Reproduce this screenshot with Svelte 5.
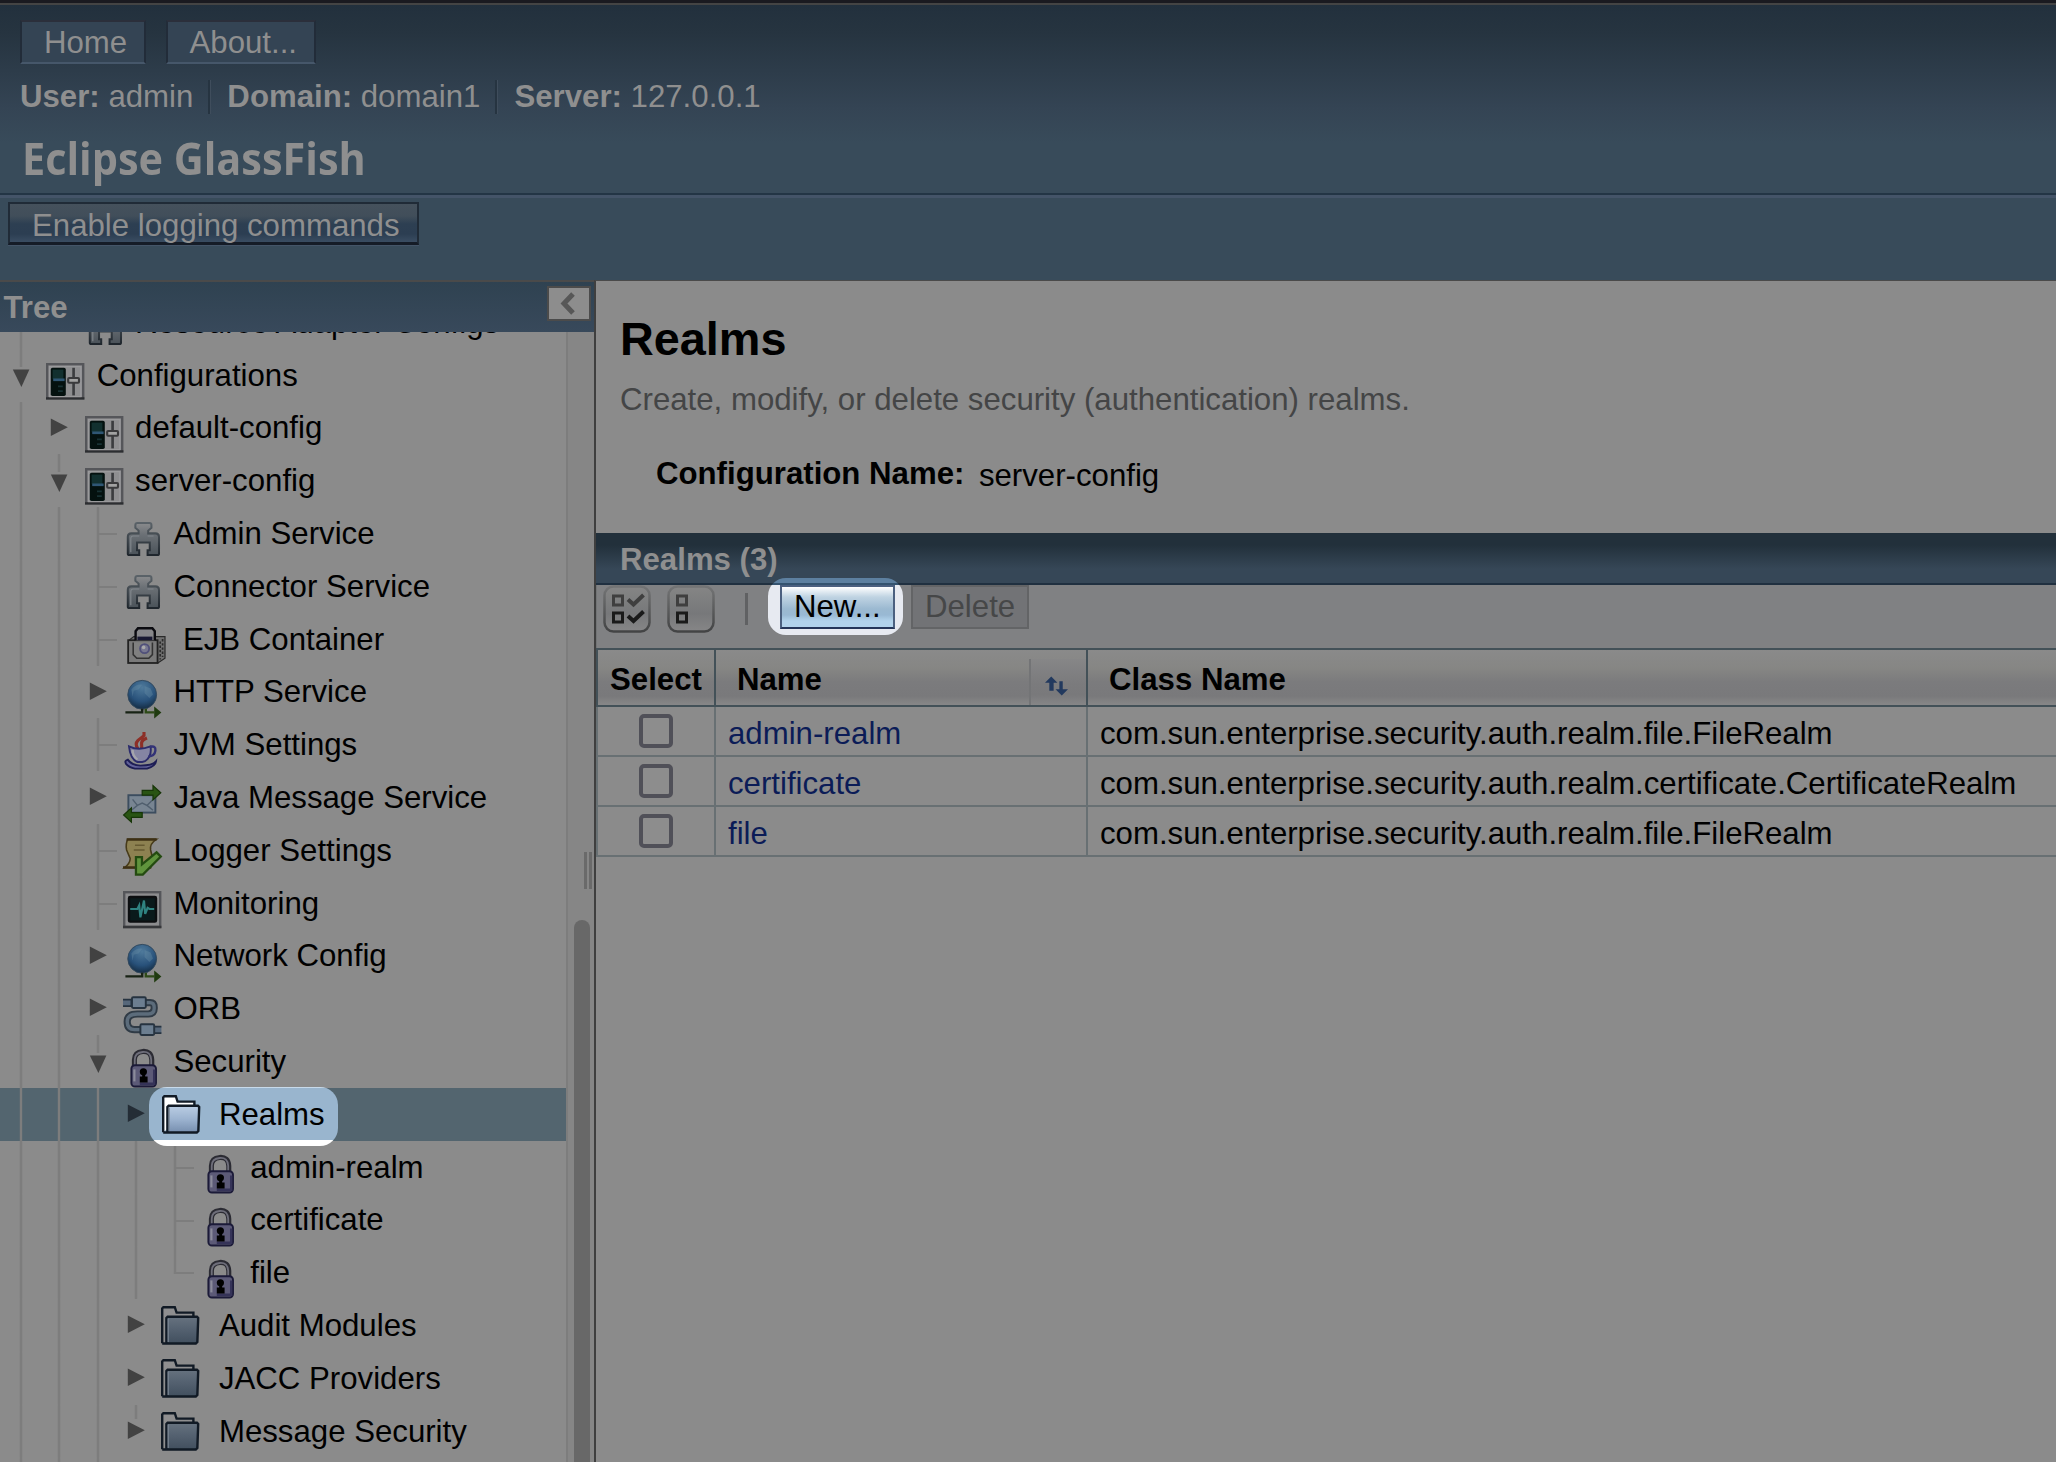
<script>
  const guides = (n) => Array.from({ length: n }, () => 'line');
  // cells: 'line' | 'tee' | 'ell' | 'none' | 'open' | 'closed' | 'closedtop'
  const rows = [
    { cells: ['line', 'none'], icon: 'plug', text: 'Resource Adapter Configs' },
    { cells: ['open'], icon: 'config', text: 'Configurations' },
    { cells: [...guides(1), 'closed'], icon: 'config', text: 'default-config' },
    { cells: [...guides(1), 'open'], icon: 'config', text: 'server-config' },
    { cells: [...guides(2), 'tee'], icon: 'plug', text: 'Admin Service' },
    { cells: [...guides(2), 'tee'], icon: 'plug', text: 'Connector Service' },
    { cells: [...guides(2), 'tee'], icon: 'ejb', text: 'EJB Container' },
    { cells: [...guides(2), 'closed'], icon: 'globe', text: 'HTTP Service' },
    { cells: [...guides(2), 'tee'], icon: 'java', text: 'JVM Settings' },
    { cells: [...guides(2), 'closed'], icon: 'jms', text: 'Java Message Service' },
    { cells: [...guides(2), 'tee'], icon: 'logger', text: 'Logger Settings' },
    { cells: [...guides(2), 'tee'], icon: 'monitor', text: 'Monitoring' },
    { cells: [...guides(2), 'closed'], icon: 'globe', text: 'Network Config' },
    { cells: [...guides(2), 'closed'], icon: 'orb', text: 'ORB' },
    { cells: [...guides(2), 'open'], icon: 'lock', text: 'Security' },
    { cells: [...guides(3), 'closed'], icon: 'folder', text: 'Realms', selected: true },
    { cells: [...guides(4), 'tee'], icon: 'lock', text: 'admin-realm' },
    { cells: [...guides(4), 'tee'], icon: 'lock', text: 'certificate' },
    { cells: [...guides(4), 'ell'], icon: 'lock', text: 'file' },
    { cells: [...guides(3), 'closed'], icon: 'folder', text: 'Audit Modules' },
    { cells: [...guides(3), 'closed'], icon: 'folder', text: 'JACC Providers' },
    { cells: [...guides(3), 'closedtop'], icon: 'folder', text: 'Message Security' },
    { cells: [...guides(3), 'none'], icon: '', text: '' }
  ];
  const realms = [
    { name: 'admin-realm', cls: 'com.sun.enterprise.security.auth.realm.file.FileRealm' },
    { name: 'certificate', cls: 'com.sun.enterprise.security.auth.realm.certificate.CertificateRealm' },
    { name: 'file', cls: 'com.sun.enterprise.security.auth.realm.file.FileRealm' }
  ];
</script>

{#snippet cell(kind)}
  <svg class="cell" viewBox="0 0 38.4 52.8">
    {#if kind === 'line' || kind === 'tee'}
      <rect class="guide" x="17.8" y="0" width="2.4" height="53" />
    {/if}
    {#if kind === 'tee'}
      <rect class="guide" x="20" y="26" width="18.4" height="2" />
    {/if}
    {#if kind === 'ell'}
      <path class="guide" d="M17.8 0h2.4v26h18.2v2H17.8z" />
    {/if}
    {#if kind === 'open'}
      <rect class="guide" x="17.8" y="0" width="2.4" height="18" />
      <path class="tri" d="M10.8 20.5h16.6l-8 17.5z" />
    {/if}
    {#if kind === 'closedtop'}
      <rect class="guide" x="17.8" y="0" width="2.4" height="14" />
    {/if}
    {#if kind === 'closed' || kind === 'closedtop'}
      <path class="tri" d="M10.8 16.5v17.5l17-8.7z" />
    {/if}
  </svg>
{/snippet}

{#snippet icon(kind)}
  <svg class="icon" class:folder={kind === 'folder'} viewBox="0 0 32 32">
    {#if kind === 'config'}
      <rect x="1" y="1" width="30" height="28.5" fill="#8e8e90" stroke="#55565a" stroke-width="2" />
      <path d="M0 29.500h32" stroke="#2c2e31" stroke-width="2" />
      <rect x="3" y="3" width="26" height="25" fill="none" stroke="#9a9a9c" />
      <rect x="4" y="4" width="12.500" height="23.500" rx="1.5" fill="#04110f" />
      <rect x="5.5" y="5.500" width="9" height="8" fill="#12302f" />
      <path d="M6 14h9.500" stroke="#2f5674" stroke-width="2.2" />
      <path d="M10 19.500h4M10 23.500h4" stroke="#173133" stroke-width="1.4" />
      <path d="M23 4v23" stroke="#3b3c3f" stroke-width="2.2" />
      <rect x="18.5" y="12.500" width="9" height="4" rx=".8" fill="#a2a2a2" stroke="#3a3a3c" stroke-width="1.8" />
    {:else if kind === 'plug'}
      <defs>
        <linearGradient id="plugfill" x1="0" y1="0" x2="0" y2="1"><stop offset="0" stop-color="#8a8b8d" /><stop offset=".35" stop-color="#6c7176" /><stop offset="1" stop-color="#4a5259" /></linearGradient>
        <linearGradient id="plugedge" x1="0" y1="0" x2="0" y2="1"><stop offset="0" stop-color="#5a6268" /><stop offset="1" stop-color="#1f262d" /></linearGradient>
      </defs>
      <path d="M12 1.700h10q1.700 0 1.700 1.700v2.300L21 8v2.300h6q3 0 3 3V27q0 1.300-1.300 1.300H20.500v-4h1.800V18H11.700v6.300h1.800v4H5.300Q4 28.300 4 27V13.300q0-3 3-3h6V8L10.300 5.700V3.400q0-1.700 1.700-1.700z" fill="url(#plugfill)" stroke="url(#plugedge)" stroke-width="1.700" />
      <path d="M6.500 26V14.500q0-2 2-2h5M20.500 12.500h5" fill="none" stroke="#80868b" stroke-width="1" />
    {:else if kind === 'ejb'}
      <path d="M5 11l4-3h26v18l-6 4z" fill="#707070" stroke="#2a2a2a" stroke-width="1" />
      <path d="M31 12v15M33 10v15" stroke="#2b2b2b" stroke-width="1.400" stroke-dasharray="2 1.500" />
      <rect x="4.300" y="11" width="24.500" height="19" fill="#7a7a7a" stroke="#222" stroke-width="1.500" />
      <path d="M10.500 11V3.500l2-2.500h12l2 2.500V11" fill="#87878a" stroke="#0b0b10" stroke-width="2" />
      <path d="M12 8h12.500v3H12z" fill="#1a1a33" />
      <path d="M8.500 13v10l3 3h10l3-3V13" fill="#808080" stroke="#333" stroke-width="1.300" />
      <circle cx="18" cy="18" r="3.800" fill="#777790" stroke="#50507a" stroke-width="1.500" /><circle cx="17.200" cy="17" r="1.500" fill="#aaa" />
    {:else if kind === 'globe'}
      <defs><radialGradient id="globefill" cx=".5" cy=".25" r=".8"><stop offset="0" stop-color="#4f7a9b" /><stop offset=".6" stop-color="#28517a" /><stop offset="1" stop-color="#11263a" /></radialGradient></defs>
      <circle cx="16" cy="12.300" r="12" fill="url(#globefill)" stroke="#33495d" stroke-width=".8" />
      <path d="M7 8q4-5 9-4l-3 4-4 1-1 5zM18 5l5 2 2 5-3 3-4-4z" fill="#6e92a9" opacity=".35" />
      <path d="M2 27h14v-3" fill="none" stroke="#182315" stroke-width="2" />
      <path d="M19 24v3h7" fill="none" stroke="#2e4a18" stroke-width="2" /><path d="M26 22l6 5-6 5z" fill="#203b10" />
    {:else if kind === 'java'}
      <path d="M17.500 0v3l-5 4q-3 3 0 7M20 5q-5 2-4.500 5t-.5 5" fill="none" stroke="#8d2f27" stroke-width="2.600" />
      <path d="M5 12q8 4 18 0 1 7-2.500 10.500-1.500 2-4.500 2.500h-4q-6-2.500-7-13z" fill="#8585a3" stroke="#2c2c6c" stroke-width="1.600" />
      <path d="M8 15q0 5 4 8" fill="none" stroke="#a5a5ac" stroke-width="2" />
      <path d="M22.500 12.500q5-1.500 4.500 3t-6 5" fill="none" stroke="#333377" stroke-width="2" />
      <path d="M4 23q-3 1-1.500 3.500Q5 29.500 10 30.500h10q7-2 7.500-6-3 3.500-13 3.500Q7 27.500 4 23z" fill="#62629a" stroke="#1e1e55" stroke-width="1.600" />
    {:else if kind === 'jms'}
      <rect x="4.500" y="8.500" width="22.500" height="14.500" fill="#788592" stroke="#3c4d5f" stroke-width="1.600" />
      <path d="M8 12l4 5 4-2 4 2 5-5M7 21l5-4M25 21l-5-4" fill="none" stroke="#505f6e" stroke-width="1.200" />
      <path d="M16 4.500h9V.5l6.500 6-6.500 6v-4h-9z" fill="#295413" stroke="#173508" />
      <path d="M16 23h-9v-4l-6.500 6L7 31v-4h9z" fill="#295413" stroke="#173508" />
    {:else if kind === 'logger'}
      <path d="M4 1h24q-6 4-5 9l2 8-2 7H1q5-4 5-8l-3-7q-1-5 1-9z" fill="#8d8151" stroke="#473b1a" stroke-width="1.300" />
      <path d="M3 1.200h25M0 24.500h10" stroke="#3e3015" stroke-width="2" /><path d="M10 6h8M9 10h9" stroke="#665a32" stroke-width="1.300" />
      <path d="M10.800 16h5v6L28 12l3.500 3.500L16.500 30.500h-5.700z" fill="#60943d" stroke="#244b11" stroke-width="1.900" />
    {:else if kind === 'monitor'}
      <rect x="1" y="1" width="30" height="29" fill="#8c8c8e" stroke="#55565a" stroke-width="2" />
      <path d="M0 30h32" stroke="#36373a" stroke-width="2" />
      <rect x="5" y="5" width="22.500" height="20.500" rx="1" fill="#0a1a1b" stroke="#0c0e10" stroke-width="2" />
      <path d="M6 15h6l1.500-3 1 10 3-14 1 11 2-5 1.500 1h4" fill="none" stroke="#2f8380" stroke-width="1.800" />
    {:else if kind === 'orb'}
      <path d="M18 5.500h4.500q3.500 0 3.500 4v1q0 4.500-5 4.500h-9q-8.500 0-8.500 6.500t6 6.500h5" fill="none" stroke="#303b46" stroke-width="6" />
      <path d="M18 5.500h4.500q3.500 0 3.500 4v1q0 4.500-5 4.500h-9q-8.500 0-8.500 6.500t6 6.500h5" fill="none" stroke="#5c6c7b" stroke-width="2.800" />
      <path d="M0 3h7v5.500H0M32 25.500h-7V31h7" fill="#56677a" stroke="#263340" stroke-width="1.500" />
      <rect x="7.500" y="1" width="11.500" height="9" rx="1" fill="#6c7e90" stroke="#263340" stroke-width="1.600" /><rect x="14.500" y="23.500" width="11.500" height="9" rx="1" fill="#6c7e90" stroke="#263340" stroke-width="1.600" />
    {:else if kind === 'lock'}
      <path d="M9.500 15V9q0-6.500 7-7t7.500 7v6" fill="none" stroke="#2b2b33" stroke-width="4.200" />
      <path d="M9.800 15V9q0-6 6.700-6.500t7 6.500v6" fill="none" stroke="#6e6e7a" stroke-width="1.500" />
      <rect x="7" y="13.500" width="20.500" height="17.800" rx="3" fill="#5c5a77" stroke="#1b1a38" stroke-width="1.600" />
      <path d="M9.500 17v10" stroke="#8b8b9b" stroke-width="1.800" /><path d="M26 17v12h-12" fill="none" stroke="#353358" stroke-width="2" />
      <circle cx="17" cy="19" r="3" fill="#000" /><path d="M16 20h2.500v3h2v5h-6.500v-5h2z" fill="#000" />
    {:else if kind === 'folder'}
      <defs>
        <linearGradient id="folderdim" x1="0" y1="0" x2="0" y2="1"><stop offset="0" stop-color="#66727f" /><stop offset=".5" stop-color="#53606f" /><stop offset="1" stop-color="#414f5e" /></linearGradient>
        <linearGradient id="folderlit" x1="0" y1="0" x2="0" y2="1"><stop offset="0" stop-color="#bacde3" /><stop offset=".5" stop-color="#9cb3d0" /><stop offset="1" stop-color="#768eae" /></linearGradient>
      </defs>
      <path class="back" d="M1 31V2l1-1h9.500l1.500 4.500h14v4.500" />
      <path class="front" d="M4.500 31V10l1-1H30l1 1-.7 20-1.300 1.300H1" />
      <path class="gleam" d="M6 30V10.500" />
    {/if}
  </svg>
{/snippet}

<div class="page">
  <header>
    <nav>
      <span class="navbtn home">Home</span>
      <span class="navbtn about">About...</span>
    </nav>
    <div class="status">
      <span><b>User:</b> admin</span><i></i><span><b>Domain:</b> domain1</span><i></i><span><b>Server:</b> 127.0.0.1</span>
    </div>
    <div class="brand">Eclipse GlassFish</div>
  </header>
  <div class="subbar"><span class="logbtn">Enable logging commands</span></div>
  <main>
    <aside>
      <div class="treehead">
        <span>Tree</span>
        <div class="collapse"><svg viewBox="0 0 40 30"><path d="M24 6l-9 9.500 9 9.500" /></svg></div>
      </div>
      <div class="treebody">
        <div class="tree">
          {#each rows as row}
            <div class="row" class:selected={row.selected}>
              {#each row.cells as kind}{@render cell(kind)}{/each}
              {#if row.selected}
                <div class="spot">
                  {@render icon(row.icon)}<span>{row.text}</span>
                </div>
              {:else if row.icon}
                {@render icon(row.icon)}
                <span class="label" class:wide={row.icon === 'folder'} class:ejb={row.icon === 'ejb'}>{row.text}</span>
              {/if}
            </div>
          {/each}
        </div>
        <div class="track"><div class="grip"></div><div class="thumb"></div></div>
      </div>
    </aside>
    <section>
      <h1>Realms</h1>
      <p class="help">Create, modify, or delete security (authentication) realms.</p>
      <p class="conf"><b>Configuration Name:</b><span>server-config</span></p>
      <div class="tabletitle">Realms (3)</div>
      <div class="toolbar">
        <svg class="tool" viewBox="0 0 48 48">
          <defs>
            <linearGradient id="toolfill" x1="0" y1="0" x2="0" y2="1"><stop offset="0" stop-color="#858585" /><stop offset=".6" stop-color="#77787a" /><stop offset="1" stop-color="#868687" /></linearGradient>
            <linearGradient id="tooledge" x1="0" y1="0" x2="0" y2="1"><stop offset="0" stop-color="#737475" /><stop offset="1" stop-color="#434445" /></linearGradient>
          </defs>
          <rect x="1.500" y="1.500" width="45" height="45" rx="9" />
          <path class="box dim" d="M10.500 11h9v9h-9z" /><path class="box" d="M10.500 28h9v9h-9z" />
          <path class="tick dim" d="M25 14.500l5.500 5 10-9.500" /><path class="tick" d="M25 31l5.500 5 10-9.500" />
        </svg>
        <svg class="tool second" viewBox="0 0 48 48">
          <rect x="1.500" y="1.500" width="45" height="45" rx="9" />
          <path class="box dim" d="M10.500 11h9v9h-9z" /><path class="box" d="M10.500 28h9v9h-9z" />
        </svg>
        <div class="sep"></div>
        <div class="newspot"><span class="new">New...</span></div>
        <span class="delete">Delete</span>
      </div>
      <div class="thead">
        <div class="c1">Select</div>
        <div class="c2"><span>Name</span><div class="sort"><svg viewBox="0 0 24 20"><path d="M6.500 0l6.500 6.500H9V15H4.500V6.500H0zM17.500 20L11 13.500h4V5h3.500v8.500H24z" /></svg></div></div>
        <div class="c3">Class Name</div>
      </div>
      {#each realms as r}
        <div class="trow">
          <div class="c1"><span class="check"></span></div>
          <div class="c2">{r.name}</div>
          <div class="c3">{r.cls}</div>
        </div>
      {/each}
    </section>
  </main>
</div>

<style>
  :global(body) { background: #8b8b8b; }
  .page { width: 2056px; height: 1462px; overflow: hidden; display: flex; flex-direction: column; background: #8b8b8b; font: 31.2px/36px 'Liberation Sans', Arial, sans-serif; color: #000; white-space: nowrap; }
  * { box-sizing: border-box; }
  header { height: 198px; flex: none; border-top: 3px solid #1a1a20; background: linear-gradient(#444 0 2px, #22303d 2px, #263440 30px, #344454 105px, #384b5a 140px); color: #8f8f8f; border-bottom: 3px solid #445468; box-shadow: inset 0 -2px #233545; }
  nav { display: flex; gap: 20px; padding: 17px 0 0 20px; }
  .navbtn { height: 44px; border: 2px solid #222c39; border-top-color: #2b2f3b; border-bottom: 2px solid #46576a; background: #344454; padding: 3px 0 0 22px; }
  .home { width: 126px; }
  .about { width: 150px; padding-left: 21.500px; }
  .status { display: flex; align-items: center; height: 34px; margin: 16px 0 0 20px; }
  .status i { width: 3px; height: 34px; background: #263441; border-right: 1px solid #3f4d5c; margin: 0 16px 0 15px; }
  .brand { font: bold 44px/50px 'Open Sans', 'Noto Sans', sans-serif; margin: 19px 0 0 21.500px; width: max-content; transform: scaleX(.941); transform-origin: 0 0; filter: blur(.6px); }
  .subbar { height: 82px; flex: none; background: #384b5a; padding: 4px 0 0 8px; }
  .logbtn { display: block; width: 411px; height: 43px; border: 2px solid #202b37; border-bottom: 3px solid #151c27; box-shadow: 0 1px #445568; background: linear-gradient(#45515c, #414e5a 12px, #2d3f52 20px, #2c3e52 30px, #3a4d62); color: #8f8f8f; padding: 4px 0 0 22px; }
  main { flex: 1; min-height: 0; display: flex; }
  aside { width: 594px; flex: none; display: flex; flex-direction: column; }
  .treehead { height: 52px; flex: none; border-top: 2px solid #4a4a4a; background: linear-gradient(#2f4251, #38495b); display: flex; justify-content: space-between; padding: 4px 3px 0 3.500px; font-weight: bold; color: #8f8f8f; }
  .treehead span { padding-top: 4px; }
  .collapse { width: 44px; height: 35px; border: 2px solid #4b4b4b; background: #8d8d8d; }
  .collapse svg { display: block; width: 40px; height: 30px; fill: none; stroke: #575757; stroke-width: 5; filter: blur(.6px); }
  .treebody { flex: 1; min-height: 0; display: flex; overflow: hidden; }
  .tree { width: 566px; margin-top: -36px; }
  .row { height: 52.8px; display: flex; padding-left: 2px; }
  .selected { background: #53656f; }
  .cell { width: 38.4px; height: 52.8px; flex: none; }
  .row .cell + .icon { margin-left: 5.800px; }
  .guide { fill: #7d7d7d; }
  .tri { fill: #424242; }
  .selected .tri { fill: #242d36; }
  .icon { width: 38.4px; height: 38.4px; flex: none; margin-top: 14px; overflow: visible; filter: blur(.45px); }
  .icon.folder { margin-top: 7px; }
  .back { fill: #8f8f90; stroke: #111a25; stroke-width: 2; }
  .front { fill: url(#folderdim); stroke: #111a25; stroke-width: 2; }
  .gleam { stroke: #7b8793; stroke-width: 1; }
  .spot .back { fill: #fff; }
  .spot .front { fill: url(#folderlit); }
  .label { padding: 8.900px 0 0 12.100px; }
  .wide { padding-left: 19.200px; }
  .ejb { padding-left: 21.600px; }
  .spot { width: 189px; height: 59px; margin: -1px 0 0 -7px; flex: none; border-radius: 18px; background: linear-gradient(#c8daea 0 1px, #99b5ce 1px 53px, #fff 53px); display: flex; padding-left: 13px; position: relative; }
  .spot .icon { margin-top: 8px; }
  .spot span { padding: 10.200px 0 0 19px; }
  .track { width: 28px; border-left: 2px solid #7d7d7d; background: #868686; display: flex; flex-direction: column; padding: 0 4px 0 6px; }
  .grip { height: 37px; width: 8px; align-self: flex-end; margin: 520px -2px 31px 0; border: solid #6a6a6a; border-width: 0 3px; }
  .thumb { flex: 1; background: #686868; border-radius: 8px 8px 0 0; width: 16px; }
  section { flex: 1; min-width: 0; border-left: 2px solid #3f3f3f; border-top: 1px solid #4a4a4a; }
  h1 { font: bold 46.800px/54px 'Liberation Sans', Arial, sans-serif; margin: 31px 0 0 24px; }
  p { margin: 0; }
  .help { color: #444546; margin: 16px 0 0 24px; }
  .conf { margin: 38px 0 0 60px; display: flex; gap: 14.500px; }
  .conf span { padding-top: 2px; }
  .tabletitle { height: 52px; margin-top: 39px; background: linear-gradient(#22303b 12px, #364757 36px); border-bottom: 2px solid #203040; padding: 8.500px 0 0 24px; font-weight: bold; color: #8f8f8f; }
  .toolbar { height: 63px; background: #808183; display: flex; padding-left: 6px; border-left: 1px solid #737576; }
  .tool { width: 48px; height: 48px; margin: 0 0 0 -.500px; filter: blur(.4px); }
  .tool rect { fill: url(#toolfill); stroke: url(#tooledge); stroke-width: 2.500; }
  .box { fill: none; stroke: #1a1a1a; stroke-width: 3; }
  .tick { fill: none; stroke: #1a1a1a; stroke-width: 4; }
  .dim { stroke: #3f3f3f; }
  .second { margin-left: 16px; margin-right: .500px; }
  .sep { width: 3px; height: 32px; background: #606163; margin: 8px 0 0 30px; }
  .newspot { position: relative; width: 135px; height: 57px; border-radius: 18px; margin: -7px 0 0 20px; background: linear-gradient(#5d80a0 5px, #34536f 5px 7px, #e7eaf1 7px); padding: 7px 0 0 12px; }
  .new { display: block; width: 115px; height: 44px; border: 2px solid #4b6080; border-bottom-color: #25365a; background: linear-gradient(#fff, #bfd3e2 10px, #9bb9d1 22px, #99b9d4 28px, #b2d3ec 34px); padding: 2px 0 0 12px; }
  .delete { width: 118px; height: 44px; margin: 0 0 0 8px; border: 2px solid #636466; background: #727376; color: #464748; padding: 2px 0 0 12px; }
  .thead, .trow { display: grid; grid-template-columns: 118px 372px 1fr; }
  .thead { height: 59px; border-top: 2px solid #435158; border-bottom: 2px solid #435158; background: linear-gradient(#8a8a8a, #868684 18px, #7b7b7d 32px, #79797b 46px, #868687 54px); font-weight: bold; }
  .thead > div { border-left: 2px solid #435158; padding: 12px 0 0 21px; }
  .thead .c1 { padding-left: 12px; }
  .thead .c2 { display: flex; justify-content: space-between; padding-top: 0; }
  .thead .c2 span { padding-top: 12px; }
  .sort { width: 57px; border-left: 2px solid #737476; margin-top: 9px; background: linear-gradient(#868687, #7b7b7d 24px, #79797b 36px, #868687); padding: 17px 0 0 14px; }
  .sort svg { display: block; width: 23px; height: 20px; fill: #22395e; filter: blur(.4px); }
  .trow { height: 50px; border-bottom: 2px solid #687073; }
  .trow > div { border-left: 2px solid #687073; padding: 9px 0 0 12px; }
  .trow .c1 { padding: 7px 0 0 41px; }
  .trow .c2 { color: #0b1c57; }
  .check { display: block; width: 34px; height: 34px; border: 4px solid #505058; border-radius: 5px; background: #8d8d8d; }
</style>
